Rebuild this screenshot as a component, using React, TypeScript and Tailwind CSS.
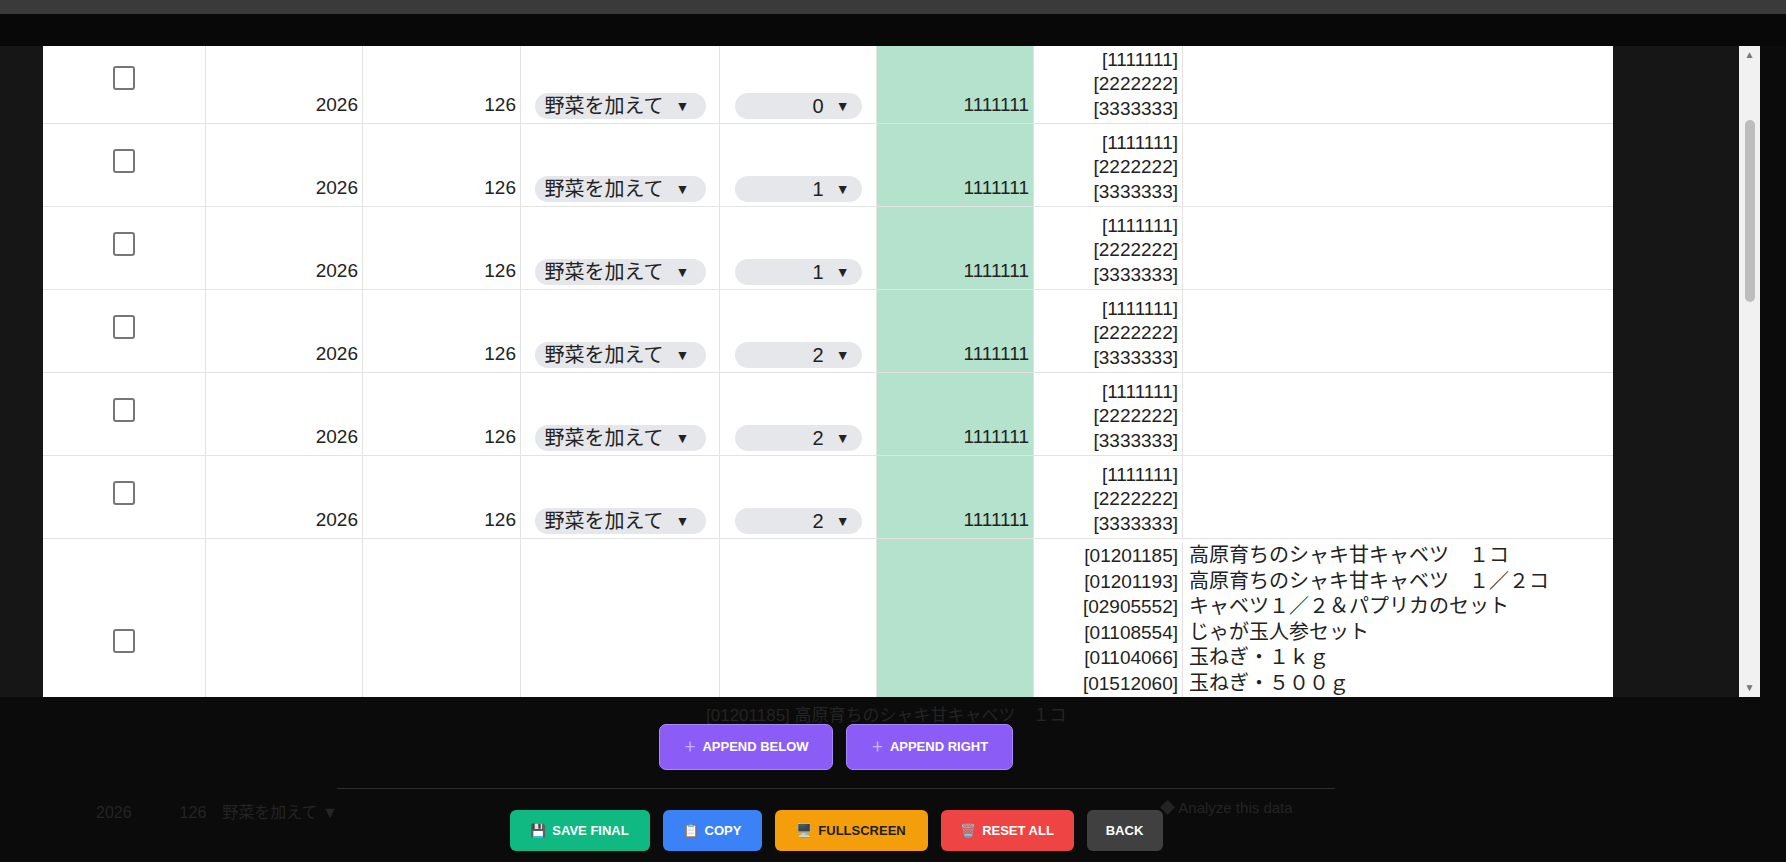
import React from "react";

const F = { fontFamily: '"Liberation Sans", "Noto Sans CJK JP", sans-serif' };

function Check() {
  return <div className="w-[22px] h-[24px] border-2 border-[#767676] rounded-[3px] bg-white" />;
}

function Sel({ label, w, left }: { label: string; w: string; left?: boolean }) {
  return (
    <div className={`${w} h-[26px] rounded-full bg-[#e5e7eb] flex items-center ${left ? "justify-start pl-[10px]" : "justify-end"} pr-[12px] gap-[12px] text-[20px] text-[#222]`}>
      <span>{label}</span>
      <span className="text-[14px]">▼</span>
    </div>
  );
}

const items: [string, string][] = [
  ["[01201185]", "高原育ちのシャキ甘キャベツ　１コ"],
  ["[01201193]", "高原育ちのシャキ甘キャベツ　１／２コ"],
  ["[02905552]", "キャベツ１／２＆パプリカのセット"],
  ["[01108554]", "じゃが玉人参セット"],
  ["[01104066]", "玉ねぎ・１ｋｇ"],
  ["[01512060]", "玉ねぎ・５００ｇ"],
  ["[01108304]", "有機人参・５００ｇ"],
];

const cell = "border-r border-b border-[#e3e3e3] h-full";

function Row({ n }: { n: string }) {
  return (
    <div className="flex h-[83px] shrink-0 text-[19px] text-[#222]">
      <div className={`${cell} w-[163px] flex items-center justify-center pb-[8px]`}><Check /></div>
      <div className={`${cell} w-[157px] flex items-end justify-end pr-[4px] pb-[4px]`}>2026</div>
      <div className={`${cell} w-[158px] flex items-end justify-end pr-[4px] pb-[4px]`}>126</div>
      <div className={`${cell} w-[199px] flex items-end justify-center pb-[4px]`}><Sel label="野菜を加えて" w="w-[171px]" left /></div>
      <div className={`${cell} w-[157px] flex items-end justify-center pb-[4px]`}><Sel label={n} w="w-[127px]" /></div>
      <div className={`${cell} w-[157px] bg-[#b4e2cc] flex items-end justify-end pr-[4px] pb-[4px]`}>1111111</div>
      <div className={`${cell} w-[149px] flex flex-col justify-end items-end pr-[4px] pb-[2px] leading-[24.5px]`}>
        <span>[1111111]</span><span>[2222222]</span><span>[3333333]</span>
      </div>
      <div className={`${cell} w-[430px] border-r-0`} />
    </div>
  );
}

function Btn({ bg, text, icon, label, w }: { bg: string; text: string; icon?: string; label: string; w: string }) {
  return (
    <div className={`${bg} ${text} ${w} h-[41px] rounded-[6px] flex items-center justify-center gap-[6px] text-[13px] font-bold`}>
      {icon && <span className="text-[13px]">{icon}</span>}
      <span>{label}</span>
    </div>
  );
}

export default function App() {
  return (
    <div className="w-[1786px] h-[862px] bg-[#0b0b0b] overflow-hidden relative" style={F}>
      <div className="h-[14px] bg-[#3a3a3a]" />
      <div className="h-[32px] bg-[#080808]" />
      <div className="flex h-[651px]">
        <div className="w-[43px] bg-[#161616]" />
        <div className="w-[1570px] bg-white overflow-hidden flex flex-col">
          <div className="-mt-[5px] flex flex-col">
            {["0", "1", "1", "2", "2", "2"].map((n, i) => <Row key={i} n={n} />)}
            <div className="flex shrink-0 h-[260px] text-[19px] text-[#222]">
              <div className={`${cell} w-[163px] flex items-start justify-center pt-[90px]`}><Check /></div>
              <div className={`${cell} w-[157px]`} />
              <div className={`${cell} w-[158px]`} />
              <div className={`${cell} w-[199px]`} />
              <div className={`${cell} w-[157px]`} />
              <div className={`${cell} w-[157px] bg-[#b4e2cc]`} />
              <div className={`${cell} w-[579px] border-r-0 flex flex-col pt-[4px] leading-[25.5px]`}>
                {items.map(([c, t]) => (
                  <div key={c} className="flex">
                    <span className="w-[149px] text-right pr-[4px] border-r border-[#e3e3e3]">{c}</span>
                    <span className="pl-[6px] whitespace-nowrap text-[20px]">{t}</span>
                  </div>
                ))}
              </div>
            </div>
          </div>
        </div>
        <div className="w-[126px] bg-[#161616]" />
        <div className="w-[21px] bg-[#f1f1f1] flex flex-col items-center">
          <div className="text-[10px] text-[#777] h-[18px] leading-[18px]">▲</div>
          <div className="w-[10px] h-[182px] mt-[56px] bg-[#bdbdbd] rounded-full" />
          <div className="flex-1" />
          <div className="text-[10px] text-[#777] h-[18px] leading-[18px]">▼</div>
        </div>
        <div className="flex-1 bg-[#0b0b0b]" />
      </div>
      <div className="relative h-[165px]">
        <div className="absolute left-[706px] top-[6px] text-[17px] text-[#242424] leading-[25px] whitespace-nowrap">
          [01201185] 高原育ちのシャキ甘キャベツ　１コ
        </div>
        <div className="absolute left-[337px] top-[91px] w-[998px] h-[1px] bg-[#2e2e2e]" />
        <div className="absolute left-[96px] top-[104px] text-[16px] text-[#242424] whitespace-nowrap">2026　　　126　野菜を加えて ▼</div>
        <div className="absolute left-[1160px] top-[100px] text-[15px] text-[#242424] whitespace-nowrap">◆ Analyze this data</div>
        <div className="relative flex flex-col items-center pt-[27px] pr-[114px]">
          <div className="flex gap-[13px]">
            <div className="w-[174px] h-[46px] rounded-[7px] bg-[#8b5cf6] border border-[#a78bfa] flex items-center justify-center gap-[6px] text-white text-[13px] font-bold"><span className="text-[#c4b5fd]">＋</span>APPEND BELOW</div>
            <div className="w-[167px] h-[46px] rounded-[7px] bg-[#8b5cf6] border border-[#a78bfa] flex items-center justify-center gap-[6px] text-white text-[13px] font-bold"><span className="text-[#c4b5fd]">＋</span>APPEND RIGHT</div>
          </div>
          <div className="flex gap-[13px] mt-[40px]">
            <Btn bg="bg-[#10b981]" text="text-white" icon="💾" label="SAVE FINAL" w="w-[140px]" />
            <Btn bg="bg-[#3b82f6]" text="text-white" icon="📋" label="COPY" w="w-[99px]" />
            <Btn bg="bg-[#f59e0b]" text="text-[#1f1f1f]" icon="🖥️" label="FULLSCREEN" w="w-[153px]" />
            <Btn bg="bg-[#ef4444]" text="text-white" icon="🗑️" label="RESET ALL" w="w-[133px]" />
            <Btn bg="bg-[#404040]" text="text-white" label="BACK" w="w-[76px]" />
          </div>
        </div>
      </div>
    </div>
  );
}
